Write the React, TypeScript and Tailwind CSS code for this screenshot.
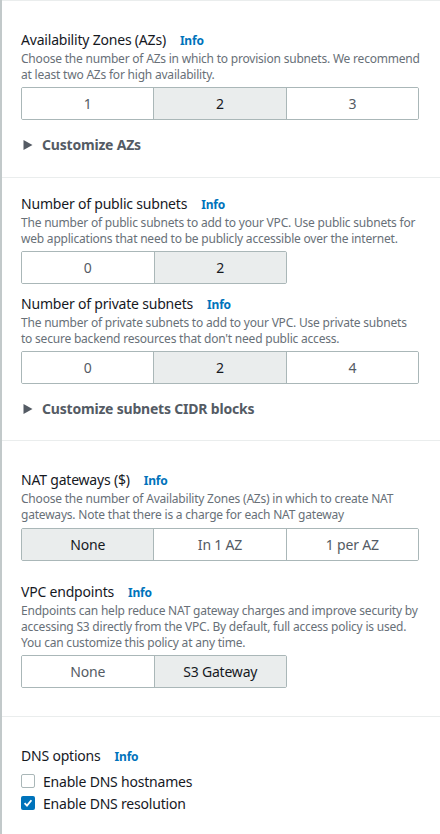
import React from "react";

type SegProps = { options: string[]; selected: number; width: string };

function Segmented({ options, selected, width }: SegProps) {
  return (
    <div className={`flex ${width} overflow-hidden rounded-[2px] border border-[#aab7b8]`}>
      {options.map((o, i) => (
        <div
          key={o + i}
          className={`flex h-[31px] flex-1 items-center justify-center text-[14px] ${
            i > 0 ? "border-l border-[#aab7b8]" : ""
          } ${i === selected ? "bg-[#eaeded] text-[#16191f]" : "bg-white text-[#545b64]"}`}
        >
          {o}
        </div>
      ))}
    </div>
  );
}

function Label({ children }: { children: React.ReactNode }) {
  return (
    <div className="flex items-baseline gap-[14px] text-[14px] leading-[20px] text-[#16191f]">
      <span>{children}</span>
      <span className="text-[12px] font-bold text-[#0073bb]">Info</span>
    </div>
  );
}

function Desc({ children }: { children: React.ReactNode }) {
  return <p className="text-[12px] leading-[16px] tracking-[-0.21px] text-[#687078]">{children}</p>;
}

function Expander({ children }: { children: React.ReactNode }) {
  return (
    <div className="flex items-center gap-[9px] pl-[2px] text-[14px] font-bold leading-[20px] text-[#545b64]">
      <svg viewBox="0 0 10 10" className="size-[10px]" fill="currentColor" aria-hidden>
        <path d="M0.5 0 L9.5 5 L0.5 10 Z" />
      </svg>
      {children}
    </div>
  );
}

function Check({ checked, label }: { checked?: boolean; label: string }) {
  return (
    <div className="flex h-[22px] items-center gap-[8px] text-[14px] text-[#16191f]">
      {checked ? (
        <span className="flex size-[14px] items-center justify-center rounded-[2px] bg-[#0073bb]">
          <svg viewBox="0 0 14 14" className="size-[12px]" fill="none" stroke="white" strokeWidth="2.2">
            <path d="M3 7.2 L5.8 10 L11 3.8" />
          </svg>
        </span>
      ) : (
        <span className="size-[14px] rounded-[2px] border border-[#aab7b8] bg-white" />
      )}
      {label}
    </div>
  );
}

export default function App() {
  return (
    <div
      className="h-[834px] w-[440px] overflow-hidden border-l-2 border-[#c2c9ca] bg-white tracking-[-0.2px]"
      style={{ fontFamily: '"Noto Sans", "Open Sans", sans-serif' }}
    >
      <section className="border-t border-[#eaeded] px-[19px] pb-[22px] pt-[29px]">
        <Label>Availability Zones (AZs)</Label>
        <Desc>
          Choose the number of AZs in which to provision subnets. We recommend at least two AZs for high
          availability.
        </Desc>
        <div className="mt-[4px]">
          <Segmented options={["1", "2", "3"]} selected={1} width="w-[398px]" />
        </div>
        <div className="mt-[15px]">
          <Expander>Customize AZs</Expander>
        </div>
      </section>

      <section className="border-t border-[#eaeded] px-[19px] pb-[21px] pt-[16px]">
        <Label>Number of public subnets</Label>
        <Desc>
          The number of public subnets to add to your VPC. Use public subnets for web applications that need to
          be publicly accessible over the internet.
        </Desc>
        <div className="mt-[4px]">
          <Segmented options={["0", "2"]} selected={1} width="w-[266px]" />
        </div>
        <div className="mt-[10px]">
          <Label>Number of private subnets</Label>
        </div>
        <Desc>
          The number of private subnets to add to your VPC. Use private subnets
          <br />
          to secure backend resources that don't need public access.
        </Desc>
        <div className="mt-[4px]">
          <Segmented options={["0", "2", "4"]} selected={1} width="w-[398px]" />
        </div>
        <div className="mt-[15px]">
          <Expander>Customize subnets CIDR blocks</Expander>
        </div>
      </section>

      <section className="border-t border-[#eaeded] px-[19px] pb-[28px] pt-[29px]">
        <Label>NAT gateways ($)</Label>
        <Desc>
          Choose the number of Availability Zones (AZs) in which to create NAT gateways. Note that there is a
          charge for each NAT gateway
        </Desc>
        <div className="mt-[5px]">
          <Segmented options={["None", "In 1 AZ", "1 per AZ"]} selected={0} width="w-[398px]" />
        </div>
        <div className="mt-[21px]">
          <Label>VPC endpoints</Label>
        </div>
        <Desc>
          Endpoints can help reduce NAT gateway charges and improve security by accessing S3 directly from the
          VPC. By default, full access policy is used. You can customize this policy at any time.
        </Desc>
        <div className="mt-[4px]">
          <Segmented options={["None", "S3 Gateway"]} selected={1} width="w-[266px]" />
        </div>
      </section>

      <section className="border-t border-[#eaeded] px-[19px] pt-[29px]">
        <Label>DNS options</Label>
        <div className="mt-[3px] flex flex-col">
          <Check label="Enable DNS hostnames" />
          <Check checked label="Enable DNS resolution" />
        </div>
      </section>
    </div>
  );
}
